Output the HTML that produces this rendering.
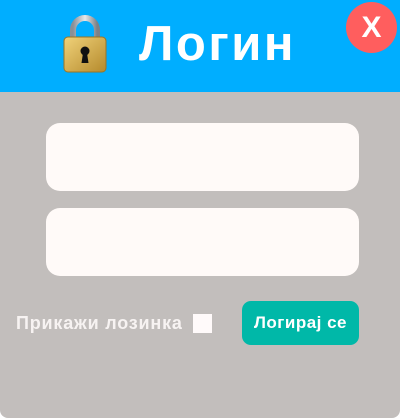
<!DOCTYPE html>
<html><head><meta charset="utf-8"><style>
*{margin:0;padding:0;box-sizing:border-box}
html,body{width:400px;height:419px;background:#fff;overflow:hidden;font-family:"Liberation Sans","DejaVu Sans",sans-serif}
.wrap{position:absolute;left:0;top:0;width:400px;height:418px;background:#c2bebc;border-radius:0 0 8px 8px;overflow:hidden}
.hdr{position:absolute;left:0;top:0;width:400px;height:92px;background:#00aeff}
.title{position:absolute;left:139px;top:14px;font-size:49px;font-weight:bold;color:#fff;line-height:60px;letter-spacing:2.5px}
.x{position:absolute;left:346px;top:2px;width:51px;height:51px;border-radius:50%;background:#ff5e5e;color:#fff;font-size:30px;font-weight:bold;text-align:center;line-height:51px}
.inp{position:absolute;left:46px;width:313px;height:68px;background:#fffaf8;border-radius:14px}
.lbl{position:absolute;left:16px;top:312px;font-size:18px;font-weight:bold;color:#f7f3f2;letter-spacing:0.8px;line-height:22px}
.cb{position:absolute;left:193px;top:314px;width:19px;height:19px;background:#fffafa}
.btn{position:absolute;left:242px;top:301px;width:117px;height:44px;background:#00b8a8;border-radius:9px;color:#fff;font-size:17px;font-weight:bold;text-align:center;line-height:44px;letter-spacing:0.5px}
</style></head><body>
<div class="wrap">
<div class="hdr">
<svg style="position:absolute;left:62px;top:14px" width="46" height="60" viewBox="0 0 46 60">
<defs><linearGradient id="g" x1="0" y1="0" x2="1" y2="1"><stop offset="0" stop-color="#f0d27a"/><stop offset="1" stop-color="#b58a2c"/></linearGradient>
<linearGradient id="s" x1="0" y1="0" x2="1" y2="0"><stop offset="0" stop-color="#8a8f96"/><stop offset=".5" stop-color="#e6e8ea"/><stop offset="1" stop-color="#7c8188"/></linearGradient></defs>
<path d="M11 26 V16 A12 12 0 0 1 35 16 V26" fill="none" stroke="url(#s)" stroke-width="6"/>
<rect x="2" y="23" width="42" height="35" rx="4" fill="url(#g)" stroke="#9a7424" stroke-width="1"/>
<circle cx="23" cy="37" r="4.5" fill="#111"/>
<path d="M21 39 L19.5 49 H26.5 L25 39 Z" fill="#111"/>
</svg>
<div class="title">Логин</div>
<div class="x">X</div>
</div>
<div class="inp" style="top:123px"></div>
<div class="inp" style="top:208px"></div>
<div class="lbl">Прикажи лозинка</div>
<div class="cb"></div>
<div class="btn">Логирај се</div>
</div>
</body></html>
